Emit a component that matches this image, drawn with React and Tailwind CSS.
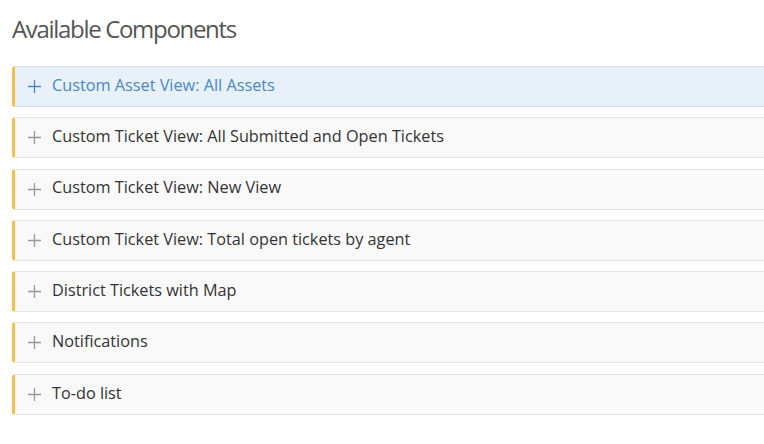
import React from 'react';

const items = [
  'Custom Asset View: All Assets',
  'Custom Ticket View: All Submitted and Open Tickets',
  'Custom Ticket View: New View',
  'Custom Ticket View: Total open tickets by agent',
  'District Tickets with Map',
  'Notifications',
  'To-do list',
];

export default function App() {
  return (
    <div className="w-[764px] h-[444px] overflow-hidden bg-white pl-3 pt-[13px] font-['Open_Sans',sans-serif]">
      <h1 className="text-[24px] leading-[32px] tracking-[-0.055em] text-[#555]">
        Available Components
      </h1>

      <div className="mt-[21px] flex flex-col gap-[10.3px] w-[780px]">
        {items.map((label, i) => (
          <ComponentRow key={label} label={label} active={i === 0} />
        ))}
      </div>
    </div>
  );
}

function ComponentRow({ label, active }) {
  return (
    <div
      className={[
        'h-[41px] flex items-center rounded-l-[3px] border border-l-[3px] border-l-[#f2c14a]',
        active
          ? 'bg-[#e8f1fa] border-[#cddbeb] text-[#4a87c9]'
          : 'bg-[#f9f9f9] border-[#e4e4e4] text-[#333]',
      ].join(' ')}
    >
      <svg
        className="ml-[13px] mr-[11px]"
        width="13"
        height="13"
        viewBox="0 0 13 13"
        fill="none"
        stroke={active ? '#4a87c9' : '#999'}
        strokeWidth="1.3"
      >
        <path d="M6.5 0v13M0 6.5h13" />
      </svg>
      <span className="text-[16.25px] leading-none pb-[3px]">{label}</span>
    </div>
  );
}
